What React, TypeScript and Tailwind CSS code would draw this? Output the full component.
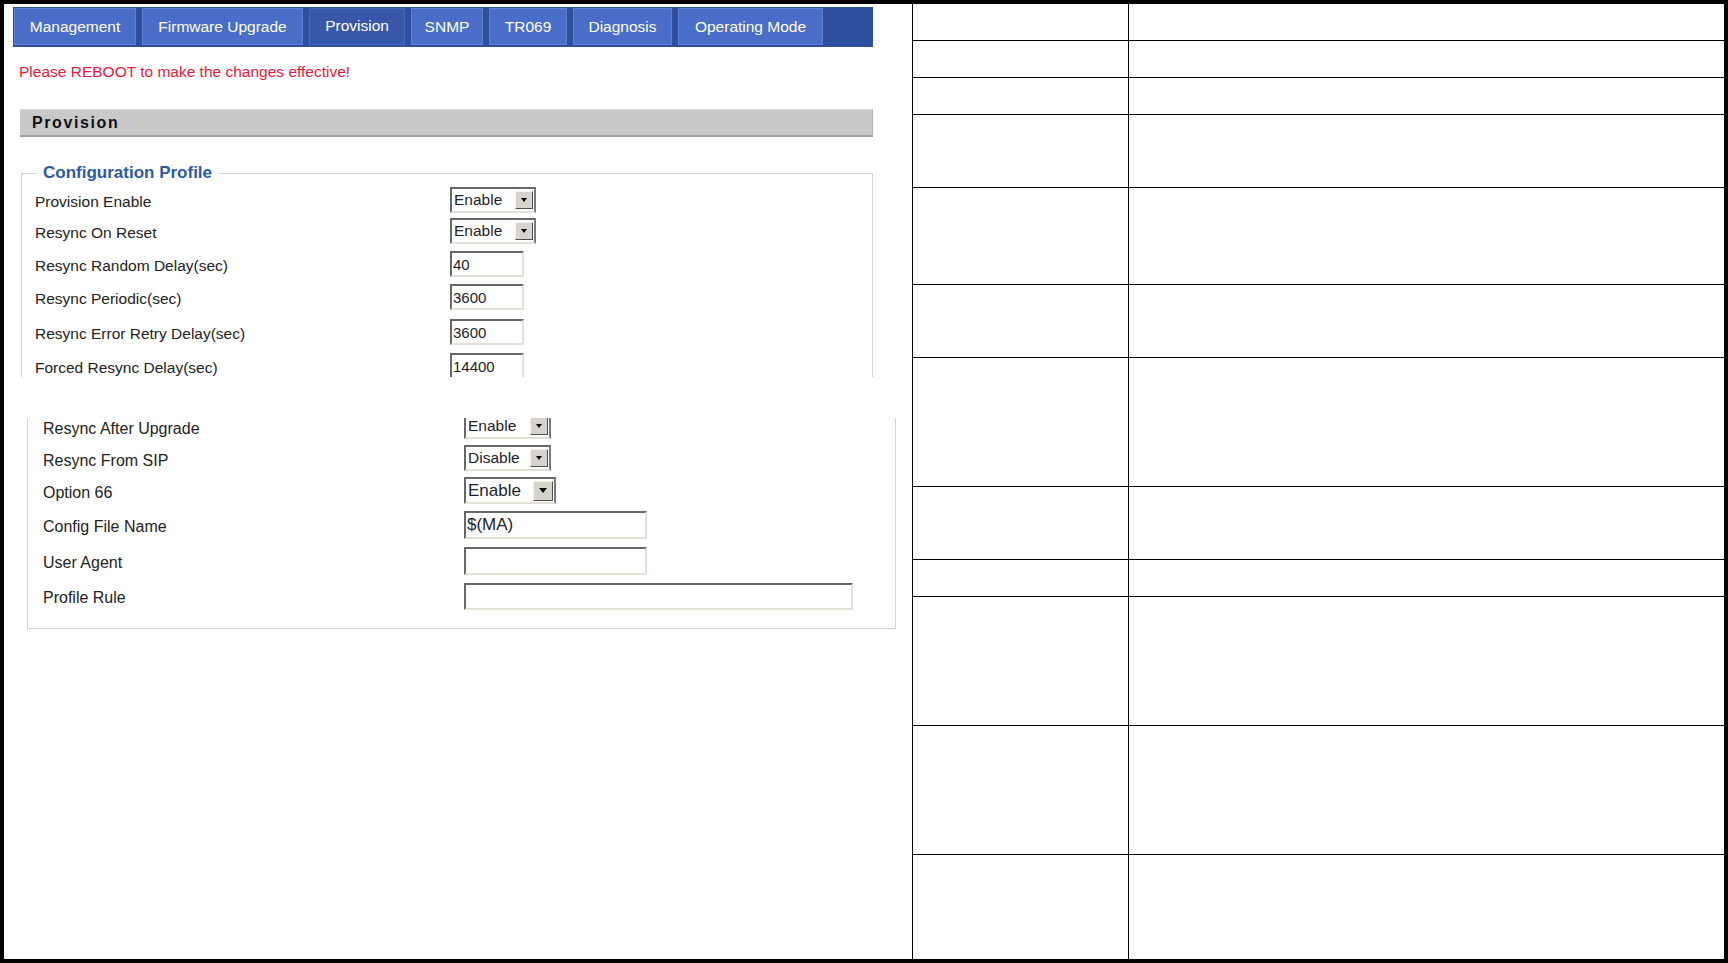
import React from "react";

type SelProps = {
  value: string;
  box: string;
  text: string;
  btn: string;
  arrow: string;
};

function FakeSelect({ value, box, text, btn, arrow }: SelProps) {
  return (
    <div
      className={`flex items-center justify-between bg-white border-2 border-t-[#686868] border-l-[#686868] border-r-[#7a7a7a] border-b-[#e3e0d8] ${box}`}
    >
      <span className={`pl-[2px] text-[#1d1d2b] ${text}`}>{value}</span>
      <span
        className={`mr-[1px] flex items-center justify-center bg-[#d6d3cc] border border-t-[#f4f4f4] border-l-[#f4f4f4] border-r-[#505050] border-b-[#505050] ${btn}`}
      >
        <span className={`w-0 h-0 border-l-transparent border-r-transparent border-t-black ${arrow}`} />
      </span>
    </div>
  );
}

function TextBox({ value, box, text }: { value: string; box: string; text: string }) {
  return (
    <input
      readOnly
      defaultValue={value}
      className={`block bg-white border-2 border-t-[#686868] border-l-[#686868] border-r-[#e3e0d8] border-b-[#e3e0d8] px-[1px] outline-none text-[#1d1d2b] ${box} ${text}`}
    />
  );
}

const tabs = [
  { name: "Management", w: "w-[122px]" },
  { name: "Firmware Upgrade", w: "w-[161px]" },
  { name: "Provision", w: "w-[96px]", active: true },
  { name: "SNMP", w: "w-[72px]" },
  { name: "TR069", w: "w-[78px]" },
  { name: "Diagnosis", w: "w-[99px]" },
  { name: "Operating Mode", w: "w-[145px]" },
];

const sel1 = {
  box: "w-[86px] h-[26px]",
  text: "text-[15.5px]",
  btn: "w-[18px] h-[18px]",
  arrow: "border-l-[3px] border-r-[3px] border-t-[4px]",
};

const firstRows = [
  { label: "Provision Enable", h: "h-[31px]", kind: "sel", value: "Enable" },
  { label: "Resync On Reset", h: "h-[33px]", kind: "sel", value: "Enable" },
  { label: "Resync Random Delay(sec)", h: "h-[33px]", kind: "txt", value: "40" },
  { label: "Resync Periodic(sec)", h: "h-[35px]", kind: "txt", value: "3600" },
  { label: "Resync Error Retry Delay(sec)", h: "h-[34px]", kind: "txt", value: "3600" },
  { label: "Forced Resync Delay(sec)", h: "h-[34px]", kind: "txt", value: "14400" },
];

const tableRows = [
  "h-[37px]",
  "h-[37px]",
  "h-[37px]",
  "h-[73px]",
  "h-[97px]",
  "h-[73px]",
  "h-[129px]",
  "h-[73px]",
  "h-[37px]",
  "h-[129px]",
  "h-[129px]",
  "h-[104px]",
];

export default function App() {
  return (
    <div className="w-[1728px] h-[963px] bg-black p-[4px] font-['Liberation_Sans',Arial,sans-serif]">
      <div className="w-full h-full bg-white flex">
        {/* left: provision page */}
        <div className="w-[908px] shrink-0">
          <div className="mt-[3px] ml-[9px] w-[860px] h-[40px] bg-[#2f4e9d] flex gap-[6px] pl-[1px] pt-[1px]">
            {tabs.map((t) => (
              <div
                key={t.name}
                className={`${t.w} h-[37px] flex items-center justify-center text-white text-[15.5px] border ${
                  t.active ? "bg-[#3857a9] border-[#4767b8] pb-[2px]" : "bg-[#4a6ec7] border-[#6081d2]"
                }`}
              >
                {t.name}
              </div>
            ))}
          </div>

          <div className="mt-[16px] ml-[15px] text-[15.5px] leading-[18px] text-[#f2143a]">
            Please REBOOT to make the changes effective!
          </div>

          <div className="mt-[28px] ml-[16px] w-[853px] h-[28px] bg-[#c9c9c9] border-t border-t-[#dedede] border-b-2 border-b-[#a2a2a2] border-r border-r-[#b0b0b0] flex items-center pl-[12px]">
            <span className="text-[16px] font-bold tracking-[1.6px] text-[#111]">Provision</span>
          </div>

          {/* configuration profile, upper part */}
          <div className="mt-[26px] ml-[17px] w-[852px] h-[214px] overflow-hidden">
            <fieldset className="border border-[#d3d3d3] px-[13px] pb-4">
              <legend className="ml-[2px] px-[6px] text-[17px] leading-[20px] font-bold text-[#2c5aa5]">
                Configuration Profile
              </legend>
              <div className="mt-[4px]">
                {firstRows.map((r) => (
                  <div key={r.label} className={`flex ${r.h}`}>
                    <div className="w-[415px] pt-[6px] text-[15.5px] leading-[18px] text-[#222]">{r.label}</div>
                    {r.kind === "sel" ? (
                      <FakeSelect value={r.value} {...sel1} />
                    ) : (
                      <TextBox value={r.value} box="w-[74px] h-[26px]" text="text-[15px]" />
                    )}
                  </div>
                ))}
              </div>
            </fieldset>
          </div>

          {/* configuration profile, lower part */}
          <div className="mt-[41px] ml-[23px] w-[869px] border-l border-r border-b border-[#d3d3d3] overflow-hidden pl-[15px]">
            <div className="-mt-[5px]">
              <div className="flex h-[32px]">
                <div className="w-[421px] pt-[6px] text-[16px] leading-[19px] text-[#222]">Resync After Upgrade</div>
                <FakeSelect
                  value="Enable"
                  box="w-[87px] h-[26px]"
                  text="text-[15.5px]"
                  btn="w-[18px] h-[18px]"
                  arrow="border-l-[3px] border-r-[3px] border-t-[4px]"
                />
              </div>
              <div className="flex h-[32px]">
                <div className="w-[421px] pt-[6px] text-[16px] leading-[19px] text-[#222]">Resync From SIP</div>
                <FakeSelect
                  value="Disable"
                  box="w-[87px] h-[26px]"
                  text="text-[15.5px]"
                  btn="w-[18px] h-[18px]"
                  arrow="border-l-[3px] border-r-[3px] border-t-[4px]"
                />
              </div>
              <div className="flex h-[34px]">
                <div className="w-[421px] pt-[6px] text-[16px] leading-[19px] text-[#222]">Option 66</div>
                <FakeSelect
                  value="Enable"
                  box="w-[92px] h-[27px]"
                  text="text-[17px]"
                  btn="w-[20px] h-[20px]"
                  arrow="border-l-[4px] border-r-[4px] border-t-[5px]"
                />
              </div>
              <div className="flex h-[36px]">
                <div className="w-[421px] pt-[6px] text-[16px] leading-[19px] text-[#222]">Config File Name</div>
                <TextBox value="$(MA)" box="w-[183px] h-[28px]" text="text-[17px]" />
              </div>
              <div className="flex h-[36px]">
                <div className="w-[421px] pt-[6px] text-[16px] leading-[19px] text-[#222]">User Agent</div>
                <TextBox value="" box="w-[183px] h-[28px]" text="text-[17px]" />
              </div>
              <div className="flex h-[45px]">
                <div className="w-[421px] pt-[5px] text-[16px] leading-[19px] text-[#222]">Profile Rule</div>
                <TextBox value="" box="w-[389px] h-[27px]" text="text-[17px]" />
              </div>
            </div>
          </div>
        </div>

        {/* right: empty table */}
        <div className="flex-1 border-l border-black flex flex-col">
          {tableRows.map((h, i) => (
            <div
              key={i}
              className={`flex shrink-0 ${h} ${i < tableRows.length - 1 ? "border-b border-black" : ""}`}
            >
              <div className="w-[216px] h-full border-r border-black" />
              <div className="flex-1" />
            </div>
          ))}
        </div>
      </div>
    </div>
  );
}
